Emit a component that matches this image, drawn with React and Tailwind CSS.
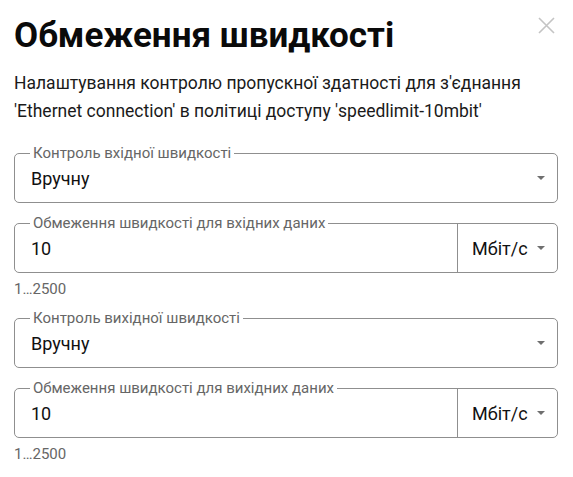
import React from 'react';

const font = { fontFamily: 'Roboto, "Noto Sans", sans-serif' };

const Caret = () => (
  <svg width="8" height="4" viewBox="0 0 8 4" className="shrink-0">
    <path d="M0 0 L8 0 L4 4 Z" fill="#6f6f6f" />
  </svg>
);

const Outlined = ({ label, children }) => (
  <div className="relative h-[50px] border border-[#8f8f8f] rounded-[5px] flex items-stretch">
    <span className="absolute -top-[10px] left-[15px] px-[3px] bg-white text-[15px] leading-[18px] text-[#666]">
      {label}
    </span>
    {children}
  </div>
);

const SelectField = ({ label, value }) => (
  <Outlined label={label}>
    <div className="flex-1 flex items-center justify-between pl-[16px] pr-[12px]">
      <span className="text-[18px] text-[#111]">{value}</span>
      <Caret />
    </div>
  </Outlined>
);

const RateField = ({ label, value, hint }) => (
  <div>
    <Outlined label={label}>
      <div className="flex-1 flex items-center pl-[16px]">
        <span className="text-[18px] text-[#111]">{value}</span>
      </div>
      <div className="w-[100px] border-l border-[#8f8f8f] flex items-center justify-between pl-[14px] pr-[12px]">
        <span className="text-[18px] text-[#111]">Мбіт/с</span>
        <Caret />
      </div>
    </Outlined>
    <p className="mt-[7px] text-[15px] leading-[18px] text-[#666]">{hint}</p>
  </div>
);

export default function App() {
  return (
    <div className="bg-white min-h-[477px] pl-[14px] pr-[15px] pt-[14px]" style={font}>
      <div className="flex items-start justify-between">
        <h1 className="text-[35px] leading-[44px] font-bold text-[#0a0a0a]">Обмеження швидкості</h1>
        <svg width="17" height="17" viewBox="0 0 17 17" className="mt-[3px] mr-[3px]">
          <path d="M1 1 L16 16 M16 1 L1 16" stroke="#c4c4c4" strokeWidth="1.6" />
        </svg>
      </div>
      <p className="mt-[11px] text-[17.5px] leading-[28px] text-[#1a1a1a]">
        Налаштування контролю пропускної здатності для з'єднання
        <br />
        'Ethernet connection' в політиці доступу 'speedlimit-10mbit'
      </p>
      <div className="mt-[28px] flex flex-col">
        <SelectField label="Контроль вхідної швидкості" value="Вручну" />
        <div className="mt-[20px]">
          <RateField label="Обмеження швидкості для вхідних даних" value="10" hint="1…2500" />
        </div>
        <div className="mt-[20px]">
          <SelectField label="Контроль вихідної швидкості" value="Вручну" />
        </div>
        <div className="mt-[20px]">
          <RateField label="Обмеження швидкості для вихідних даних" value="10" hint="1…2500" />
        </div>
      </div>
    </div>
  );
}
